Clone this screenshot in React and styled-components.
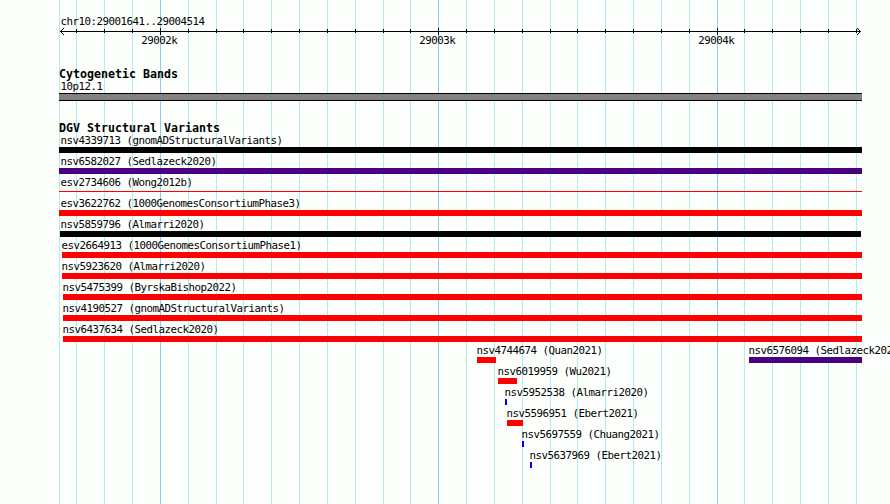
import React from "react";
import styled, { createGlobalStyle } from "styled-components";

const MAJOR = [160, 438, 717];
const LINES = [
  76, 104, 132, 160, 188, 216, 243, 271, 299, 327, 355, 383, 410, 438, 466,
  494, 522, 550, 577, 605, 633, 661, 689, 717, 744, 772, 800, 828, 856,
];

const RED = "#ff0000";
const BLACK = "#000000";
const INDIGO = "#4b0082";
const BLUE = "#0000ff";

const ROWS = [
  [{ name: "nsv4339713 (gnomADStructuralVariants)", start: 59, end: 862, color: BLACK, shift: 1.5 }],
  [{ name: "nsv6582027 (Sedlazeck2020)", start: 59, end: 862, color: INDIGO, shift: 1.5 }],
  [{ name: "esv2734606 (Wong2012b)", start: 59, end: 862, color: RED, thin: true, shift: 1.5 }],
  [{ name: "esv3622762 (1000GenomesConsortiumPhase3)", start: 59, end: 862, color: RED, shift: 1.5 }],
  [{ name: "nsv5859796 (Almarri2020)", start: 60, end: 861, color: BLACK, shift: 0.5 }],
  [{ name: "esv2664913 (1000GenomesConsortiumPhase1)", start: 62, end: 862, color: RED }],
  [{ name: "nsv5923620 (Almarri2020)", start: 62, end: 862, color: RED }],
  [{ name: "nsv5475399 (ByrskaBishop2022)", start: 63, end: 862, color: RED }],
  [{ name: "nsv4190527 (gnomADStructuralVariants)", start: 63, end: 862, color: RED }],
  [{ name: "nsv6437634 (Sedlazeck2020)", start: 63, end: 862, color: RED }],
  [
    { name: "nsv4744674 (Quan2021)", start: 477, end: 496, color: RED },
    { name: "nsv6576094 (Sedlazeck2020)", start: 749, end: 862, color: INDIGO },
  ],
  [{ name: "nsv6019959 (Wu2021)", start: 498, end: 517, color: RED }],
  [{ name: "nsv5952538 (Almarri2020)", start: 505, end: 507, color: BLUE }],
  [{ name: "nsv5596951 (Ebert2021)", start: 507, end: 523, color: RED }],
  [{ name: "nsv5697559 (Chuang2021)", start: 522, end: 524, color: BLUE }],
  [{ name: "nsv5637969 (Ebert2021)", start: 530, end: 532, color: BLUE }],
];

const App = () => {
  return (
    <>
      <GlobalStyle />
      <Browser>
        <Grid>
          <GridLine $x={59} />
          {LINES.map((x) => (
            <GridLine key={x} $x={x} $major={MAJOR.includes(x)} />
          ))}
        </Grid>
        <Panel>
          <Region>chr10:29001641..29004514</Region>
          <Ruler />
          <ScaleLabels>
            <span>29002k</span>
            <span>29003k</span>
            <span>29004k</span>
          </ScaleLabels>
          <TrackTitle>Cytogenetic Bands</TrackTitle>
          <BandName>10p12.1</BandName>
          <Band />
          <VariantTitle>DGV Structural Variants</VariantTitle>
          {ROWS.map((row) => (
            <Row key={row[0].name}>
              {row.map((item) => (
                <Variant key={item.name} $start={item.start}>
                  <Label $shift={item.shift}>{item.name}</Label>
                  <Bar
                    $width={item.end - item.start}
                    $color={item.color}
                    $thin={item.thin}
                  />
                </Variant>
              ))}
            </Row>
          ))}
        </Panel>
      </Browser>
    </>
  );
};

const Ruler = () => (
  <Axis width="890" height="9" viewBox="0 0 890 9" shapeRendering="crispEdges">
    <path d="M60 4h801v1H60z" />
    {LINES.map((x) => (
      <rect
        key={x}
        x={x}
        y={MAJOR.includes(x) ? 1 : 2}
        width="1"
        height={MAJOR.includes(x) ? 7 : 4}
      />
    ))}
    <path d="M61 3h1v1h-1zM61 5h1v1h-1zM62 2h1v1h-1zM62 6h1v1h-1zM63 1h1v1h-1zM63 7h1v1h-1z" />
    <path d="M859 3h1v1h-1zM859 5h1v1h-1zM858 2h1v1h-1zM858 6h1v1h-1zM857 1h1v1h-1zM857 7h1v1h-1z" />
  </Axis>
);

const GlobalStyle = createGlobalStyle`
  body {
    margin: 0;
    overflow: hidden;
    background: #fdfffc;
  }
`;

const Browser = styled.main`
  position: relative;
  width: 890px;
  height: 504px;
  overflow: hidden;
  background: #fdfffc;
  color: #000;
  font: 10.8px/12px "DejaVu Sans Mono", monospace;
  letter-spacing: -0.502px;
  white-space: pre;
`;

/* Guide lines run behind every track */
const Grid = styled.div`
  position: absolute;
  inset: 0;
`;

const GridLine = styled.i`
  position: absolute;
  left: ${({ $x }) => $x}px;
  width: 1px;
  height: 100%;
  background: ${({ $major }) => ($major ? "#87ceeb" : "#afeeee")};
`;

const Panel = styled.div`
  position: relative;
  display: flex;
  flex-direction: column;
  padding-top: 16px;
`;

const Region = styled.div`
  height: 11px;
  padding-left: 60.5px;
`;

const Axis = styled.svg`
  display: block;
`;

const ScaleLabels = styled.div`
  display: grid;
  grid-template-columns: 278px 279px 60px;
  height: 12px;
  padding-left: 141.3px;
  margin-top: -1px;
`;

const TrackTitle = styled.h2`
  height: 13px;
  margin: 21px 0 0;
  padding-left: 59px;
  font: bold 11.63px/13px "DejaVu Sans Mono", monospace;
  letter-spacing: 0;
`;

const BandName = styled.div`
  height: 12px;
  padding-left: 60.5px;
`;

const Band = styled.div`
  box-sizing: border-box;
  width: 803px;
  height: 8px;
  margin-left: 59px;
  border: solid #000;
  border-width: 1px 0;
  background: #848084;
`;

const VariantTitle = styled(TrackTitle)`
  margin-top: 21px;
`;

const Row = styled.div`
  display: grid;
  height: 21px;
`;

const Variant = styled.div`
  grid-area: 1 / 1;
  padding-left: ${({ $start }) => $start}px;
`;

const Label = styled.div`
  height: 12px;
  margin-left: ${({ $shift = -0.5 }) => $shift}px;
`;

const Bar = styled.div`
  width: ${({ $width }) => $width}px;
  height: ${({ $thin }) => ($thin ? 1 : 6)}px;
  margin-top: ${({ $thin }) => ($thin ? 2 : 0)}px;
  background: ${({ $color }) => $color};
`;

export default App;
